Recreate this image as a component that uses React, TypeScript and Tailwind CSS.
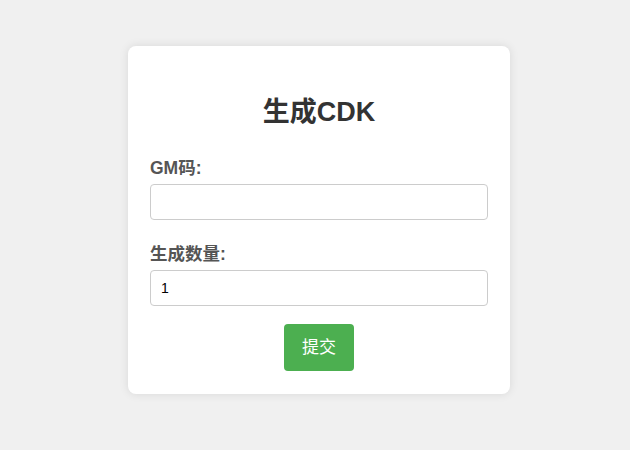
import React from "react";

export default function App() {
  const font = { fontFamily: '"Liberation Sans", Arial, "Noto Sans CJK SC", sans-serif' };
  return (
    <div className="w-[630px] h-[450px] bg-[#f0f0f0] flex justify-center pt-[46px] pl-[8px]" style={font}>
      <div className="w-[382px] h-[348px] bg-white rounded-[8px] shadow-[0_0_10px_rgba(0,0,0,0.1)] px-[22px] pt-[51px] flex flex-col">
        <h2 className="text-[27px] leading-[30px] font-bold text-[#333] text-center">生成CDK</h2>
        <label className="mt-[31px] block text-[17.5px] leading-[20px] font-bold text-[#555]">GM码:</label>
        <input
          type="text"
          className="mt-[6px] w-[338px] h-[36px] border border-[#ccc] rounded-[4px] px-[10px] text-[14px] text-black outline-none font-['Liberation_Sans',Arial,sans-serif]"
        />
        <label className="mt-[24px] block text-[17.5px] leading-[20px] font-bold text-[#555]">生成数量:</label>
        <input
          type="text"
          defaultValue="1"
          className="mt-[6px] w-[338px] h-[36px] border border-[#ccc] rounded-[4px] px-[10px] text-[14px] text-black outline-none font-['Liberation_Sans',Arial,sans-serif]"
        />
        <div className="flex justify-center mt-[18px]">
          <button className="w-[70px] h-[47px] bg-[#4caf50] text-white text-[17px] rounded-[4px]">提交</button>
        </div>
      </div>
    </div>
  );
}
